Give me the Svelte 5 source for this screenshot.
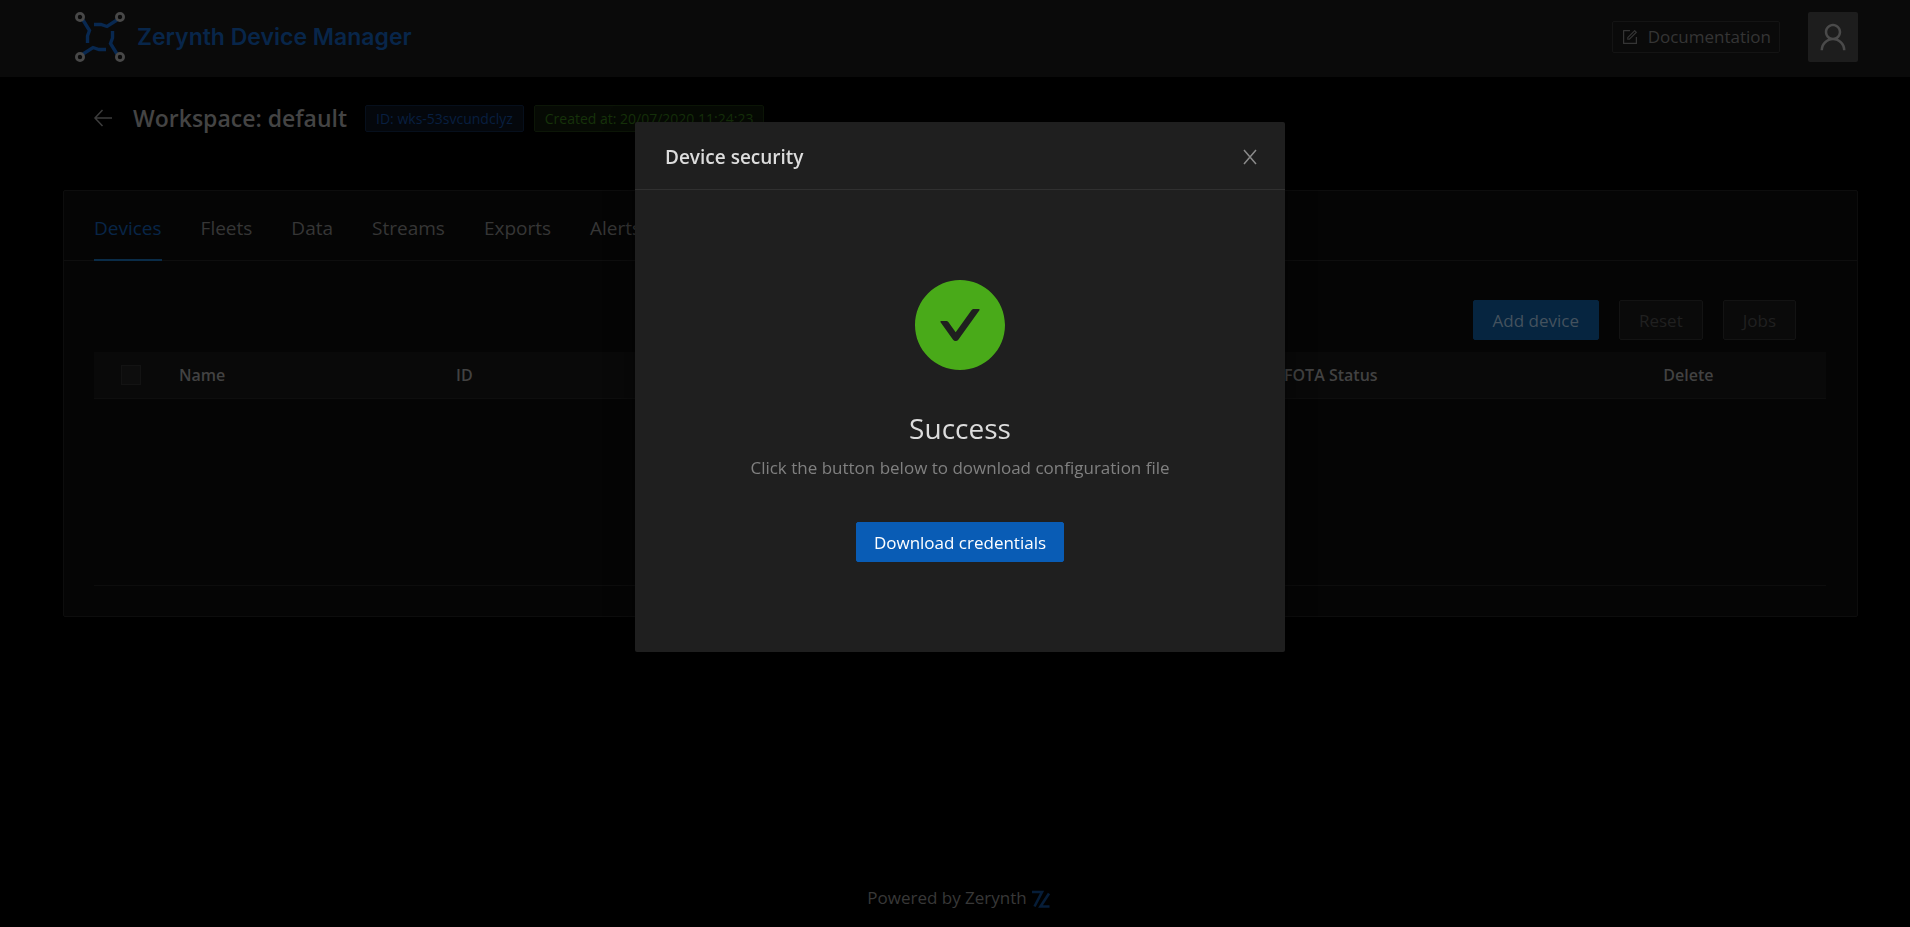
<script>
  const tabs = ['Devices', 'Fleets', 'Data', 'Streams', 'Exports', 'Alerts'];
  let active = $state('Devices');
  let open = $state(true);
</script>

<div class="page">
  <header class="topbar">
    <a class="brand" href="#home">
      <svg class="brand-mark" viewBox="0 0 50 50" aria-hidden="true">
        <g fill="none" stroke="#082850" stroke-width="3.4">
          <path d="M8 8 L14.5 18.5 L12.5 24 V31" />
          <path d="M42 8 L32 14.5 L26 12.500 H19" />
          <path d="M42 42 L35.500 31.500 L37.500 26 V19" />
          <path d="M8 42 L18 35.500 L24 37.500 H31" />
        </g>
        <g fill="#0a0a0a" stroke="#484848" stroke-width="2.800">
          <circle cx="5" cy="5" r="3.600" />
          <circle cx="45" cy="5" r="3.600" />
          <circle cx="5" cy="45" r="3.600" />
          <circle cx="45" cy="45" r="3.600" />
        </g>
      </svg>
      <span>Zerynth Device Manager</span>
    </a>
    <div class="account">
      <a class="docs" href="#documentation">
        <svg viewBox="0 0 1024 1024" aria-hidden="true"><path d="M904 512h-56c-4.400 0-8 3.600-8 8v320H184V184h320c4.400 0 8-3.600 8-8v-56c0-4.400-3.600-8-8-8H144c-17.700 0-32 14.300-32 32v736c0 17.700 14.300 32 32 32h736c17.700 0 32-14.300 32-32V520c0-4.400-3.600-8-8-8z" /><path d="M355.900 534.900L354 653.800c-.1 8.900 7.100 16.200 16 16.200h.4l118-2.900c2-.1 4-.9 5.400-2.300l415.900-415c3.100-3.100 3.100-8.200 0-11.300L785.400 114.300c-1.600-1.600-3.600-2.300-5.700-2.300s-4.100.8-5.700 2.300l-415.800 415a8.300 8.300 0 00-2.300 5.600zm63.500 23.600L779.700 199l45.200 45.100-360.500 359.700-45.700 1.100.7-46.400z" /></svg>
        Documentation
      </a>
      <button class="avatar" aria-label="Account">
        <svg viewBox="0 0 1024 1024" aria-hidden="true"><path d="M858.500 763.600a374 374 0 00-80.600-119.500 375.630 375.630 0 00-119.500-80.600c-.4-.2-.8-.3-1.200-.5C719.500 518 760 444.700 760 362c0-137-111-248-248-248S264 225 264 362c0 82.700 40.500 156 102.800 201.100-.4.2-.8.3-1.200.5-44.800 18.900-85 46-119.500 80.600a375.630 375.630 0 00-80.600 119.500A371.700 371.700 0 00136 901.800a8 8 0 008 8.200h60c4.400 0 7.900-3.500 8-7.800 2-77.200 33-149.500 87.800-204.300 56.700-56.700 132-87.900 212.200-87.900s155.500 31.200 212.200 87.900C779 752.700 810 825 812 902.200c.1 4.400 3.600 7.800 8 7.800h60a8 8 0 008-8.200c-1-47.800-10.900-94.300-29.500-138.200zM512 534c-45.900 0-89.100-17.900-121.600-50.400S340 407.900 340 362c0-45.900 17.900-89.100 50.400-121.600S466.100 190 512 190s89.100 17.900 121.600 50.400S684 316.100 684 362c0 45.900-17.900 89.100-50.400 121.600S557.900 534 512 534z" /></svg>
      </button>
    </div>
  </header>

  <main>
    <div class="heading">
      <button class="back" aria-label="Back">
        <svg viewBox="0 0 20 20" aria-hidden="true"><path d="M19 10H2M9.500 2L2 10l7.500 8" /></svg>
      </button>
      <h1>Workspace: default</h1>
      <span class="tag blue">ID: wks-53svcundclyz</span>
      <span class="tag green">Created at: 20/07/2020 11:24:23</span>
    </div>

    <section class="card">
      <nav class="tabs">
        {#each tabs as tab}
          <button class:active={active === tab} onclick={() => (active = tab)}>{tab}</button>
        {/each}
      </nav>
      <div class="card-body">
        <div class="actions">
          <button class="btn primary">Add device</button>
          <button class="btn" disabled>Reset</button>
          <button class="btn" disabled>Jobs</button>
        </div>
        <table>
          <colgroup>
            <col class="c-check" /><col class="c-name" /><col class="c-id" /><col class="c-fota" /><col class="c-delete" />
          </colgroup>
          <thead>
            <tr>
              <th class="check"><input type="checkbox" disabled aria-label="Select all devices" /></th>
              <th>Name</th>
              <th>ID</th>
              <th>FOTA Status</th>
              <th>Delete</th>
            </tr>
          </thead>
          <tbody>
            <tr><td colspan="5"></td></tr>
          </tbody>
        </table>
      </div>
    </section>
  </main>

  <footer>
    Powered by Zerynth
    <svg viewBox="0 0 20 20" aria-hidden="true"><path d="M1 4H11L3.500 18.500M18 5.500L9.500 18.500H18.500" /></svg>
  </footer>
</div>

{#if open}
  <div class="overlay">
    <div class="modal" role="dialog" aria-modal="true" aria-labelledby="dialog-title">
      <div class="modal-head">
        <h2 id="dialog-title">Device security</h2>
        <button class="close" aria-label="Close" onclick={() => (open = false)}>
          <svg viewBox="0 0 16 16" aria-hidden="true"><path d="M2 1l12 14M14 1L2 15" /></svg>
        </button>
      </div>
      <div class="result">
        <svg class="ok" viewBox="64 64 896 896" aria-hidden="true"><path d="M512 64C264.600 64 64 264.600 64 512s200.600 448 448 448 448-200.600 448-448S759.400 64 512 64zm193.500 301.700l-210.600 292a31.800 31.800 0 01-51.700 0L318.500 484.900c-3.800-5.300 0-12.700 6.500-12.700h46.900c10.200 0 19.900 4.900 25.900 13.300l71.200 98.800 157.200-218c6-8.300 15.600-13.300 25.900-13.300H699c6.500 0 10.300 7.400 6.500 12.700z" /></svg>
        <h3>Success</h3>
        <p>Click the button below to download configuration file</p>
        <button class="btn download">Download credentials</button>
      </div>
    </div>
  </div>
{/if}

<style>
  :global(body) {
    margin: 0;
    background: #000;
  }

  .page,
  .overlay {
    font-family: 'Open Sans', 'Noto Sans', sans-serif;
    font-size: 17px;
    line-height: 24px;
    box-sizing: border-box;
  }

  .page {
    display: flex;
    flex-direction: column;
    min-height: 100vh;
    color: #363636;
  }

  button {
    font: inherit;
    color: inherit;
    border: 0;
    padding: 0;
    background: none;
    cursor: pointer;
  }

  svg {
    display: block;
  }

  h1,
  h2,
  h3,
  p {
    margin: 0;
  }

  .topbar {
    display: flex;
    align-items: center;
    justify-content: space-between;
    padding: 12px 52px 15px 75px;
    background: #0a0a0a;
  }

  .brand {
    display: flex;
    align-items: center;
    gap: 12px;
    color: #08264a;
    font: 600 23px/34px Inter, sans-serif;
    text-decoration: none;
  }

  .brand-mark {
    width: 50px;
    height: 50px;
  }

  .account {
    display: flex;
    align-items: center;
    gap: 28px;
  }

  .docs {
    display: flex;
    align-items: center;
    gap: 9px;
    padding: 3px 8px;
    border: 1px solid #141414;
    border-radius: 2px;
    color: #353535;
    text-decoration: none;
  }

  .docs svg {
    width: 18px;
    height: 18px;
    fill: currentColor;
  }

  .avatar {
    display: grid;
    place-items: center;
    width: 50px;
    height: 50px;
    border-radius: 2px;
    background: #1d1d1d;
    color: #4a4a4a;
  }

  .avatar svg {
    width: 34px;
    height: 34px;
    fill: currentColor;
  }

  main {
    flex: 1;
    padding: 24px 52px 0 63px;
  }

  .heading {
    display: flex;
    align-items: center;
    gap: 10px;
    padding: 0 30px;
    margin-bottom: 55px;
  }

  .back {
    margin-right: 10px;
  }

  .back svg {
    width: 20px;
    height: 20px;
    fill: none;
    stroke: #3c3c3c;
    stroke-width: 1.500;
  }

  h1 {
    margin-right: 8px;
    color: #444;
    font-size: 23px;
    line-height: 34px;
    font-weight: 600;
  }

  .tag {
    padding: 0 10px;
    border: 1px solid;
    border-radius: 2px;
    font-size: 14px;
    line-height: 25px;
  }

  .blue {
    color: #081f40;
    border-color: #060f1c;
    background: #04070c;
  }

  .green {
    color: #16320a;
    border-color: #0c1607;
    background: #060a04;
  }

  .card {
    border: 1px solid #0d0d0d;
    border-radius: 2px;
    background: #050505;
  }

  .tabs {
    display: flex;
    gap: 39px;
    padding: 0 30px;
    border-bottom: 1px solid #0e0e0e;
  }

  .tabs button {
    padding: 25px 0 18px;
    border-bottom: 2px solid transparent;
    margin-bottom: -1px;
    color: #363636;
    font-size: 19px;
    line-height: 25px;
  }

  .tabs .active {
    color: #082548;
    border-color: #0a2c48;
  }

  .card-body {
    padding: 39px 31px 30px 30px;
  }

  .actions {
    display: flex;
    justify-content: flex-end;
    gap: 20px;
    padding-right: 30px;
    margin-bottom: 12px;
  }

  .btn {
    padding: 8px 19px 6px;
    border: 1px solid #131313;
    border-radius: 2px;
    background: #0a0a0a;
    color: #202020;
  }

  .btn:disabled {
    cursor: not-allowed;
  }

  .primary {
    border-color: #062540;
    background: #062540;
    color: #44525e;
  }

  table {
    width: 100%;
    table-layout: fixed;
    border-collapse: collapse;
  }

  .c-check { width: 65px; }
  .c-name { width: 16%; }
  .c-id { width: 47.8%; }
  .c-fota { width: 21.9%; }

  th {
    height: 46px;
    padding: 0 20px;
    border-bottom: 1px solid #0e0e0e;
    background: #090909;
    color: #424242;
    font-size: 16px;
    font-weight: 600;
    text-align: left;
  }

  .check {
    padding: 0 0 0 27px;
  }

  .check input {
    appearance: none;
    display: block;
    width: 20px;
    height: 20px;
    margin: 0;
    border: 1px solid #131313;
    background: #0d0d0d;
  }

  td {
    height: 186px;
    padding: 0;
    border-bottom: 1px solid #0d0d0d;
  }

  footer {
    display: flex;
    align-items: center;
    justify-content: center;
    gap: 4px;
    padding: 0 0 17px 8px;
    color: #383838;
  }

  footer svg {
    width: 20px;
    height: 20px;
    fill: none;
    stroke: #061d38;
    stroke-width: 2.600;
  }

  .overlay {
    position: fixed;
    inset: 0;
    padding: 122px 0 0 10px;
  }

  .modal {
    width: 650px;
    max-width: 100%;
    margin: 0 auto;
    border-radius: 2px;
    background: #1f1f1f;
    box-shadow: 0 8px 28px rgba(0, 0, 0, 0.5);
  }

  .modal-head {
    display: flex;
    align-items: center;
    justify-content: space-between;
    padding: 22px 27px 19px 30px;
    border-bottom: 1px solid #303030;
    color: #dcdcdc;
  }

  h2 {
    font-size: 19px;
    line-height: 26px;
    font-weight: 600;
  }

  .close svg {
    width: 16px;
    height: 16px;
    fill: none;
    stroke: #8a8a8a;
    stroke-width: 1.500;
  }

  .result {
    display: flex;
    flex-direction: column;
    align-items: center;
    padding: 90px 30px;
  }

  .ok {
    width: 90px;
    height: 90px;
    margin-bottom: 36px;
    fill: #49aa19;
  }

  h3 {
    color: #dcdcdc;
    font-size: 28px;
    line-height: 44px;
    font-weight: 400;
  }

  p {
    margin-bottom: 37px;
    color: #808080;
    line-height: 35px;
  }

  .download {
    padding: 8px 17px 6px;
    border-color: #095cb5;
    background: #095cb5;
    color: #fff;
  }
</style>
